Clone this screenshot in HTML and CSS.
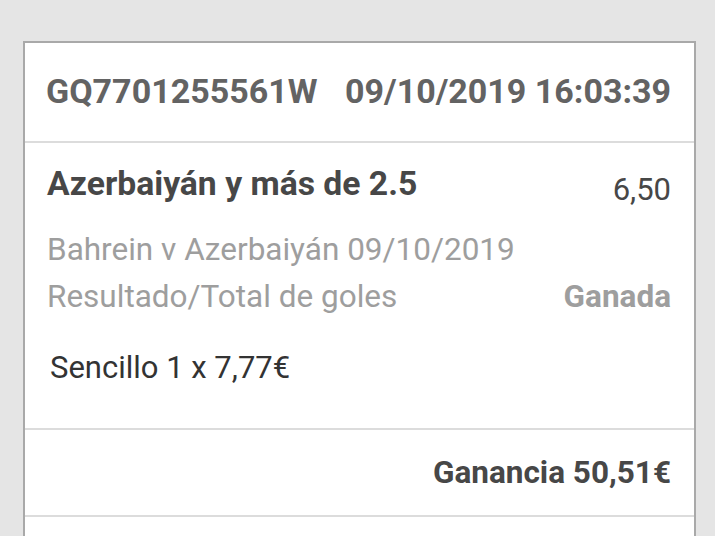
FILE: index.html
```html
<!DOCTYPE html>
<html lang="es">
<head>
    <meta charset="UTF-8">
    <meta name="viewport" content="width=device-width, initial-scale=1.0">
    <title>Apuesta</title>
    <link rel="stylesheet" href="styles.css">
</head>
<body>
    <div class="ticket">
        <!-- Header -->
        <div class="ticket-head">
            <span class="code">GQ7701255561W</span>
            <span class="stamp">09/10/2019 16:03:39</span>
        </div>

        <!-- Selection -->
        <div class="ticket-body">
            <div class="row">
                <span class="pick">Azerbaiyán y más de 2.5</span>
                <span class="odds">6,50</span>
            </div>
            <div class="row muted event">Bahrein v Azerbaiyán 09/10/2019</div>
            <div class="row muted market">
                <span>Resultado/Total de goles</span>
                <span class="status">Ganada</span>
            </div>
            <div class="stake">Sencillo 1 x 7,77€</div>
        </div>

        <!-- Total -->
        <div class="ticket-total">Ganancia 50,51€</div>
        <div class="ticket-foot"></div>
    </div>
</body>
</html>
```
FILE: styles.css
```css
/* General Styles */
body {
    margin: 0;
    padding: 41px 19px 0 23px;
    background-color: #e5e5e5;
    font-family: Roboto, "Noto Sans", sans-serif;
    overflow: hidden;
    height: 536px;
    box-sizing: border-box;
}

.ticket {
    background-color: #fff;
    border: 2px solid #a9a9a9;
    border-bottom: none;
}

.ticket-head {
    height: 95px;
    display: flex;
    align-items: center;
    justify-content: space-between;
    padding: 0 23px 3px 21px;
    font-size: 34px;
    font-weight: bold;
    color: #636363;
    white-space: nowrap;
    border-bottom: 2px solid #dcdcdc;
}

.ticket-body {
    padding: 21px 23px 0 22px;
    height: 264px;
    border-bottom: 2px solid #dcdcdc;
}

.row {
    display: flex;
    justify-content: space-between;
    align-items: baseline;
}

.pick {
    font-size: 33.7px;
    font-weight: bold;
    color: #474747;
}

.odds {
    font-size: 31px;
    color: #474747;
    position: relative;
    top: 5px;
}

.muted {
    font-size: 31.5px;
    color: #9e9e9e;
}

.event {
    margin-top: 28px;
}

.market {
    margin-top: 10px;
}

.status {
    font-weight: bold;
}

.stake {
    margin-top: 34px;
    padding-left: 3px;
    font-size: 31px;
    color: #333;
}

.ticket-total {
    height: 85px;
    display: flex;
    align-items: center;
    justify-content: flex-end;
    padding: 0 23px;
    font-size: 31.5px;
    font-weight: bold;
    color: #474747;
    border-bottom: 2px solid #dcdcdc;
}

.ticket-foot {
    height: 40px;
}
```
